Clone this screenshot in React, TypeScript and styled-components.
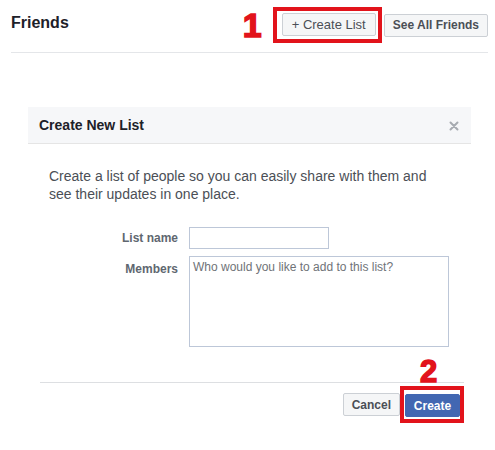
import React from 'react';
import styled, { createGlobalStyle } from 'styled-components';

const GlobalStyle = createGlobalStyle`
  html, body {
    margin: 0;
    padding: 0;
    background: #ffffff;
  }
  body {
    font-family: 'Liberation Sans', Arial, sans-serif;
    color: #1d2129;
  }
`;

function App(): JSX.Element {
  return (
    <Page>
      <GlobalStyle />
      <TopBar>
        <Title>Friends</Title>
        <Actions>
          <Marker>1</Marker>
          <Highlight $pad='2px 2px 3px 5px'>
            <PlainButton>+ Create List</PlainButton>
          </Highlight>
          <PlainButton $bold>See All Friends</PlainButton>
        </Actions>
      </TopBar>

      <Modal>
        <ModalHeader>
          <ModalTitle>Create New List</ModalTitle>
          <Close aria-label='Close'>
            <svg width='10' height='10' viewBox='0 0 10 10'>
              <path
                d='M1.5 1.5 L8.5 8.5 M8.5 1.5 L1.5 8.5'
                stroke='#a7abb1'
                strokeWidth='2'
                strokeLinecap='round'
              />
            </svg>
          </Close>
        </ModalHeader>

        <ModalBody>
          <Description>
            Create a list of people so you can easily share with them and see
            their updates in one place.
          </Description>
          <Form>
            <Label>List name</Label>
            <TextInput type='text' />
            <Label $offset={2}>Members</Label>
            <TextArea placeholder='Who would you like to add to this list?' />
          </Form>
        </ModalBody>

        <ModalFooter>
          <PlainButton $bold>Cancel</PlainButton>
          <Highlight $pad='4px 0 2px 1px'>
            <FooterMarker>2</FooterMarker>
            <PrimaryButton>Create</PrimaryButton>
          </Highlight>
        </ModalFooter>
      </Modal>
    </Page>
  );
}

export default App;

const Page = styled.div`
  width: 495px;
  height: 450px;
  overflow: hidden;
`;

const TopBar = styled.div`
  display: flex;
  align-items: center;
  justify-content: space-between;
  margin: 0 7px 0 11px;
  padding: 7px 0 9px;
  border-bottom: 1px solid #e4e6e9;
`;

const Title = styled.h1`
  margin: 0 0 4px;
  font-size: 16px;
  font-weight: 700;
  color: #1d2129;
`;

const Actions = styled.div`
  display: flex;
  align-items: center;
  gap: 2px;
`;

const Marker = styled.span`
  margin-right: 9px;
  font-size: 34px;
  font-weight: 700;
  line-height: 1;
  color: #e2131b;
  -webkit-text-stroke: 1.5px #e2131b;
`;

const Highlight = styled.div<{ $pad: string }>`
  position: relative;
  display: flex;
  border: 4px solid #e2131b;
  padding: ${props => props.$pad};
`;

const PlainButton = styled.button<{ $bold?: boolean }>`
  height: 23px;
  padding: 0 ${props => (props.$bold ? 8 : 9)}px;
  border: 1px solid #ccd0d5;
  border-radius: 2px;
  background: #f5f6f7;
  font-family: 'Liberation Sans', Arial, sans-serif;
  font-size: ${props => (props.$bold ? '12px' : '13px')};
  font-weight: ${props => (props.$bold ? 700 : 400)};
  color: #4b4f56;
  white-space: nowrap;
`;

const PrimaryButton = styled.button`
  height: 23px;
  width: 55px;
  padding: 0;
  border: 1px solid #4267b2;
  border-radius: 2px;
  background: #4267b2;
  font-family: 'Liberation Sans', Arial, sans-serif;
  font-size: 12px;
  font-weight: 700;
  color: #ffffff;
`;

const FooterMarker = styled.span`
  position: absolute;
  left: 16px;
  bottom: calc(100% + 3px);
  font-size: 31px;
  font-weight: 700;
  line-height: 1;
  color: #e2131b;
  -webkit-text-stroke: 1.5px #e2131b;
`;

const Modal = styled.div`
  width: 443px;
  margin: 54px 0 0 28px;
  background: #ffffff;
`;

const ModalHeader = styled.div`
  display: flex;
  align-items: center;
  justify-content: space-between;
  height: 36px;
  padding: 0 12px 0 11px;
  background: #f6f7f9;
  border-bottom: 1px solid #e5e5e5;
`;

const ModalTitle = styled.h2`
  margin: 0;
  font-size: 14px;
  font-weight: 700;
  color: #1d2129;
`;

const Close = styled.span`
  display: flex;
  margin-top: 2px;
`;

const ModalBody = styled.div`
  padding: 23px 21px 35px;
`;

const Description = styled.p`
  max-width: 390px;
  margin: 0 0 24px;
  font-size: 14px;
  line-height: 18px;
  color: #4b4f56;
`;

const Form = styled.div`
  display: grid;
  grid-template-columns: 129px 260px;
  column-gap: 11px;
  row-gap: 7px;
  align-items: start;
`;

const Label = styled.label<{ $offset?: number }>`
  padding-top: ${props => props.$offset ?? 0}px;
  font-size: 12px;
  font-weight: 700;
  line-height: 22px;
  text-align: right;
  color: #606770;
`;

const TextInput = styled.input`
  box-sizing: border-box;
  width: 140px;
  height: 22px;
  margin: 0;
  border: 1px solid #bdc7d8;
  outline: none;
`;

const TextArea = styled.textarea`
  box-sizing: border-box;
  width: 260px;
  height: 91px;
  margin: 0;
  padding: 3px 3px;
  border: 1px solid #bdc7d8;
  outline: none;
  resize: none;
  font-family: 'Liberation Sans', Arial, sans-serif;
  font-size: 12px;
  line-height: 15px;

  &::placeholder {
    color: #6f7378;
  }
`;

const ModalFooter = styled.div`
  display: flex;
  align-items: center;
  justify-content: flex-end;
  margin: 0 7px 0 12px;
  padding-top: 3px;
  border-top: 1px solid #dddfe2;
`;
